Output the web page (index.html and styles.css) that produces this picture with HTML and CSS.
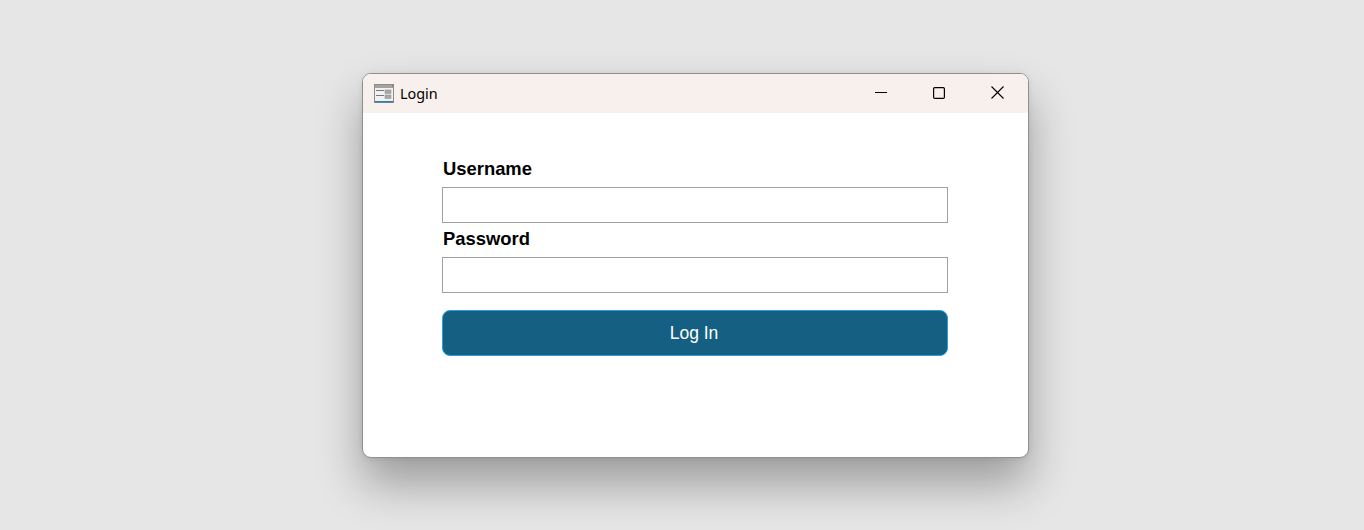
FILE: index.html
```html
<!DOCTYPE html>
<html lang="en">
<head>
<meta charset="utf-8">
<title>Login</title>
<link rel="stylesheet" href="styles.css">
</head>
<body>
<main class="window">
  <header class="titlebar">
    <svg class="app-icon" width="20" height="19" viewBox="0 0 20 19" aria-hidden="true">
      <rect x="0.5" y="0.5" width="19" height="18" fill="#f2f2f2" stroke="#8b8b8b"/>
      <rect x="1" y="1" width="18" height="3" fill="#a3a3a3"/>
      <rect x="18" y="1" width="1" height="2" fill="#c8703a"/>
      <rect x="1" y="17" width="18" height="1.4" fill="#2f7fa8"/>
      <rect x="2" y="6" width="8" height="1" fill="#777"/>
      <rect x="2" y="11" width="8" height="1" fill="#777"/>
      <rect x="11" y="6" width="6" height="3.5" fill="#a9a9a9" stroke="#888" stroke-width="0.5"/>
      <rect x="11" y="11" width="6" height="3.5" fill="#a9a9a9" stroke="#888" stroke-width="0.5"/>
    </svg>
    <span class="title">Login</span>
    <div class="controls">
      <button class="ctl" aria-label="Minimize"><svg width="12" height="12" viewBox="0 0 12 12"><path d="M0 5.5H12" stroke="#000" fill="none"/></svg></button>
      <button class="ctl" aria-label="Maximize"><svg width="12" height="12" viewBox="0 0 12 12"><rect x="0.6" y="0.6" width="10.8" height="10.8" rx="1.2" stroke="#000" stroke-width="1.2" fill="none"/></svg></button>
      <button class="ctl" aria-label="Close"><svg width="13" height="13" viewBox="0 0 13 13"><path d="M0.5 0.5L12.5 12.5M12.5 0.5L0.5 12.5" stroke="#000" stroke-width="1.1" fill="none"/></svg></button>
    </div>
  </header>
  <form class="form">
    <label class="label" for="u">Username</label>
    <input class="input" id="u" type="text">
    <label class="label" for="p">Password</label>
    <input class="input" id="p" type="password">
    <button class="submit" type="button">Log In</button>
  </form>
</main>
</body>
</html>
```
FILE: styles.css
```css
* { box-sizing: border-box; }
html, body { height: 100%; }
body {
  margin: 0;
  background: #e6e6e6;
  overflow: hidden;
  padding: 73px 0 0 362px;
}
.window {
  width: 667px;
  height: 385px;
  background: #fff;
  border: 1px solid #8f8f8f;
  border-radius: 9px;
  overflow: hidden;
  box-shadow: 0 26px 46px rgba(0, 0, 0, 0.32), 0 1px 6px rgba(0, 0, 0, 0.08);
}
.titlebar {
  height: 39px;
  background: #f8f0ed;
  display: flex;
  align-items: center;
  padding-left: 11px;
}
.app-icon { flex: none; }
.title {
  margin-left: 6px;
  margin-top: -1px;
  font: 14.4px "Noto Sans", "Open Sans", sans-serif;
  color: #000;
}
.controls { margin-left: auto; display: flex; height: 100%; padding-right: 1px; }
.ctl {
  width: 58.5px;
  height: 100%;
  padding: 0;
  border: 0;
  background: none;
  display: flex;
  align-items: center;
  justify-content: center;
  margin-top: -1px;
}
.form {
  display: flex;
  flex-direction: column;
  width: 506px;
  margin: 44px 0 0 79px;
  font-family: "Liberation Sans", Arial, sans-serif;
}
.label {
  height: 30px;
  padding-left: 1px;
  font-size: 18.4px;
  font-weight: 700;
  line-height: 24px;
  color: #000;
}
.input {
  height: 36px;
  margin-bottom: 4px;
  border: 1px solid #a0a0a0;
  background: #fff;
  border-radius: 0;
  outline: 0;
}
.submit {
  height: 46px;
  margin-top: 13px;
  padding: 0 2px 0 0;
  background: #156082;
  border: 1px solid #2e9fd6;
  border-radius: 8px;
  color: #fff;
  font: 17.5px "Liberation Sans", Arial, sans-serif;
}
```
